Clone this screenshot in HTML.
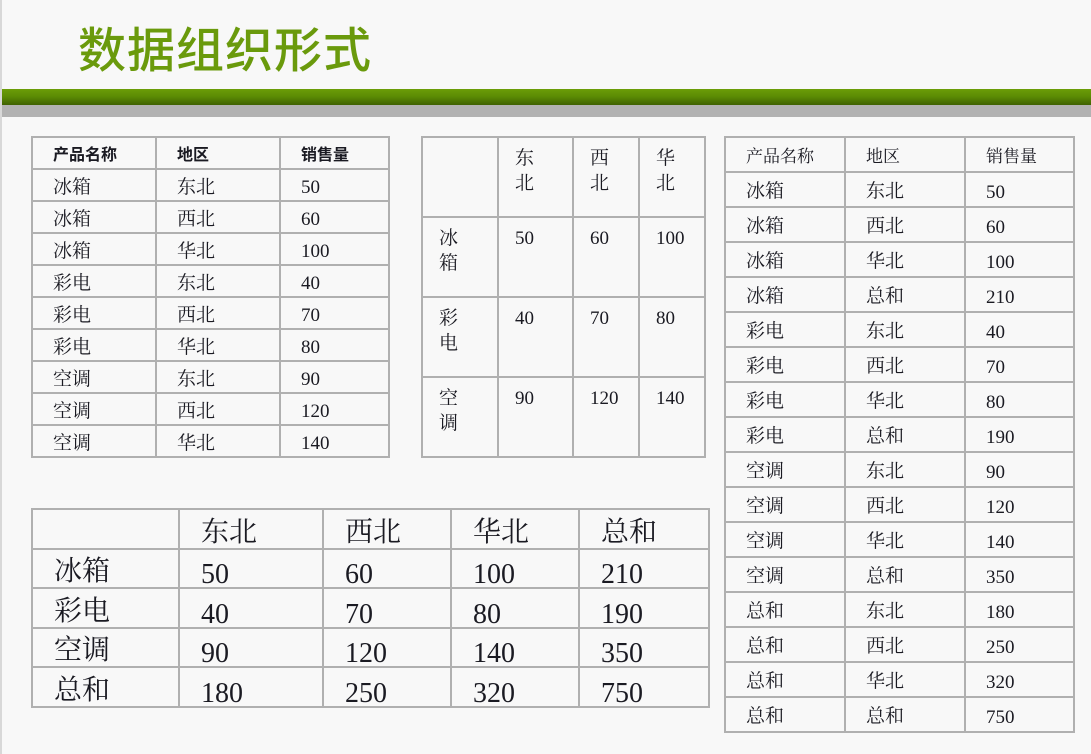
<!DOCTYPE html>
<html><head><meta charset="utf-8"><style>
body{margin:0;width:1091px;height:754px;background:#f8f8f8;position:relative;overflow:hidden;font-family:"Liberation Serif","Noto Serif CJK SC",serif;color:#1a1a22}
.edge{position:absolute;left:0;top:0;width:2px;height:754px;background:#d8d8d8}
h1{position:absolute;left:78px;top:11px;margin:0;font:500 48px "Liberation Sans","Noto Sans CJK SC",sans-serif;color:#6a9a0c;letter-spacing:1px}
.g{position:absolute;left:2px;top:89px;width:1089px;height:16px;background:linear-gradient(#6c9d08,#5a8a04 50%,#3f6202)}
.gr{position:absolute;left:2px;top:105px;width:1089px;height:12px;background:#b2b2b2}
table{position:absolute;border-collapse:collapse;table-layout:fixed}
td{border:2px solid #b0b0b0;padding:0;overflow:hidden;white-space:nowrap}
.n{position:relative;top:3px}
#t1{left:31px;top:136px;font-size:19px}
#t1 td{height:30px;padding-left:20px}
#t1 tr:first-child td{font:bold 16px "Liberation Sans","Noto Sans CJK SC",sans-serif}
#t2{left:421px;top:136px;font-size:19px}
#t2 td{height:80px;vertical-align:top;padding:8px 0 0 16px;line-height:25px;white-space:normal;box-sizing:border-box}
#t3{left:724px;top:136px;font-size:19px}
#t3 td{height:33px;padding-left:20px}
#t3 tr:first-child td{font-size:17px}
#t4{left:31px;top:508px;font-size:28px}
#t4 td{height:37.5px;padding-left:21px;line-height:30px;vertical-align:bottom}
</style></head><body>
<div class="edge"></div>
<h1>数据组织形式</h1>
<div class="g"></div><div class="gr"></div>

<table id="t1"><colgroup><col style="width:124px"><col style="width:124px"><col style="width:109px"></colgroup>
<tr><td>产品名称</td><td>地区</td><td>销售量</td></tr>
<tr><td>冰箱</td><td>东北</td><td><span class="n">50</span></td></tr>
<tr><td>冰箱</td><td>西北</td><td><span class="n">60</span></td></tr>
<tr><td>冰箱</td><td>华北</td><td><span class="n">100</span></td></tr>
<tr><td>彩电</td><td>东北</td><td><span class="n">40</span></td></tr>
<tr><td>彩电</td><td>西北</td><td><span class="n">70</span></td></tr>
<tr><td>彩电</td><td>华北</td><td><span class="n">80</span></td></tr>
<tr><td>空调</td><td>东北</td><td><span class="n">90</span></td></tr>
<tr><td>空调</td><td>西北</td><td><span class="n">120</span></td></tr>
<tr><td>空调</td><td>华北</td><td><span class="n">140</span></td></tr>
</table>

<table id="t2"><colgroup><col style="width:76px"><col style="width:75px"><col style="width:66px"><col style="width:66px"></colgroup>
<tr><td></td><td>东<br>北</td><td>西<br>北</td><td>华<br>北</td></tr>
<tr><td>冰<br>箱</td><td>50</td><td>60</td><td>100</td></tr>
<tr><td>彩<br>电</td><td>40</td><td>70</td><td>80</td></tr>
<tr><td>空<br>调</td><td>90</td><td>120</td><td>140</td></tr>
</table>

<table id="t3"><colgroup><col style="width:120px"><col style="width:120px"><col style="width:109px"></colgroup>
<tr><td>产品名称</td><td>地区</td><td>销售量</td></tr>
<tr><td>冰箱</td><td>东北</td><td><span class="n">50</span></td></tr>
<tr><td>冰箱</td><td>西北</td><td><span class="n">60</span></td></tr>
<tr><td>冰箱</td><td>华北</td><td><span class="n">100</span></td></tr>
<tr><td>冰箱</td><td>总和</td><td><span class="n">210</span></td></tr>
<tr><td>彩电</td><td>东北</td><td><span class="n">40</span></td></tr>
<tr><td>彩电</td><td>西北</td><td><span class="n">70</span></td></tr>
<tr><td>彩电</td><td>华北</td><td><span class="n">80</span></td></tr>
<tr><td>彩电</td><td>总和</td><td><span class="n">190</span></td></tr>
<tr><td>空调</td><td>东北</td><td><span class="n">90</span></td></tr>
<tr><td>空调</td><td>西北</td><td><span class="n">120</span></td></tr>
<tr><td>空调</td><td>华北</td><td><span class="n">140</span></td></tr>
<tr><td>空调</td><td>总和</td><td><span class="n">350</span></td></tr>
<tr><td>总和</td><td>东北</td><td><span class="n">180</span></td></tr>
<tr><td>总和</td><td>西北</td><td><span class="n">250</span></td></tr>
<tr><td>总和</td><td>华北</td><td><span class="n">320</span></td></tr>
<tr><td>总和</td><td>总和</td><td><span class="n">750</span></td></tr>
</table>

<table id="t4"><colgroup><col style="width:147px"><col style="width:144px"><col style="width:128px"><col style="width:128px"><col style="width:130px"></colgroup>
<tr><td></td><td>东北</td><td>西北</td><td>华北</td><td>总和</td></tr>
<tr><td>冰箱</td><td><span class="n">50</span></td><td><span class="n">60</span></td><td><span class="n">100</span></td><td><span class="n">210</span></td></tr>
<tr><td>彩电</td><td><span class="n">40</span></td><td><span class="n">70</span></td><td><span class="n">80</span></td><td><span class="n">190</span></td></tr>
<tr><td>空调</td><td><span class="n">90</span></td><td><span class="n">120</span></td><td><span class="n">140</span></td><td><span class="n">350</span></td></tr>
<tr><td>总和</td><td><span class="n">180</span></td><td><span class="n">250</span></td><td><span class="n">320</span></td><td><span class="n">750</span></td></tr>
</table>
</body></html>
